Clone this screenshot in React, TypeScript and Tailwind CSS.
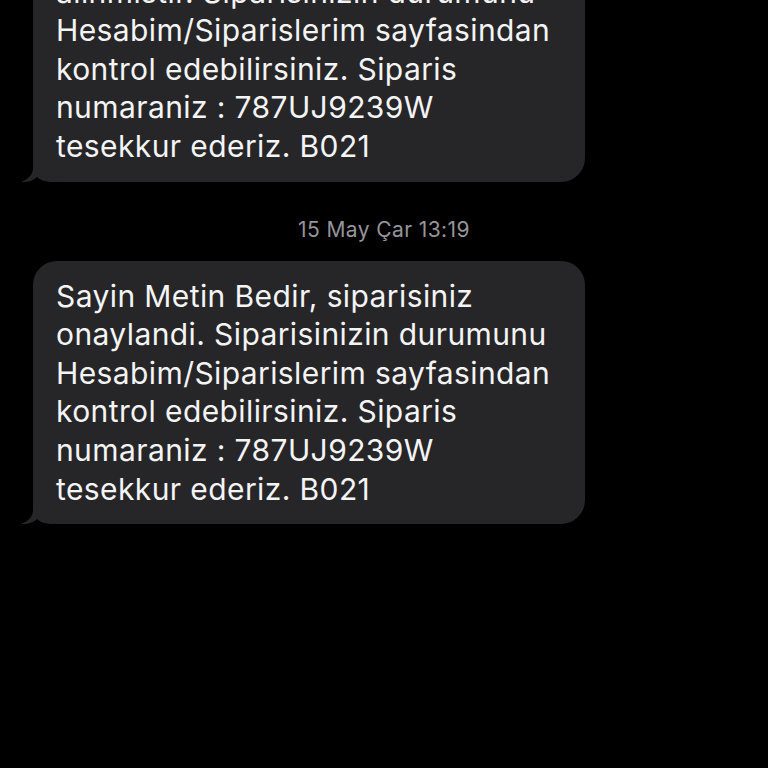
import React from "react";

const lines2 = [
  "Sayin Metin Bedir, siparisiniz",
  "onaylandi. Siparisinizin durumunu",
  "Hesabim/Siparislerim sayfasindan",
  "kontrol edebilirsiniz. Siparis",
  "numaraniz : 787UJ9239W",
  "tesekkur ederiz. B021",
];

const lines1 = [
  "Sayin Metin Bedir, siparisiniz",
  "alinmistir. Siparisinizin durumunu",
  "Hesabim/Siparislerim sayfasindan",
  "kontrol edebilirsiniz. Siparis",
  "numaraniz : 787UJ9239W",
  "tesekkur ederiz. B021",
];

function Bubble({ lines }: { lines: string[] }) {
  return (
    <div className="relative w-[552px]">
      <div className="rounded-[24px] bg-[#262628] pl-[23px] pr-4 py-[16px] text-[30px] leading-[38.6px] text-[#f4f4f5] tracking-[0.4px]">
        {lines.map((l, i) => (
          <div key={i} className="whitespace-nowrap">{l}</div>
        ))}
      </div>
      <svg className="absolute left-[-12px] bottom-0" width="34" height="22" viewBox="0 0 34 22">
        <path d="M12 0 L12 8 C12 14 8 19 0 22 C8 22.5 13 20 16 17 C19 20 24 22 34 22 L34 0 Z" fill="#262628" />
      </svg>
    </div>
  );
}

export default function App() {
  return (
    <div className="w-[768px] h-[768px] overflow-hidden bg-black" style={{ fontFamily: "Inter, 'Noto Sans', sans-serif" }}>
      <div className="flex flex-col pl-[33px] mt-[-82px]">
        <Bubble lines={lines1} />
        <div className="w-[702px] text-center text-[21px] text-[#95959a] tracking-[0.4px] mt-[37px] mb-[20px] leading-[22px]">15 May Çar 13:19</div>
        <Bubble lines={lines2} />
      </div>
    </div>
  );
}
